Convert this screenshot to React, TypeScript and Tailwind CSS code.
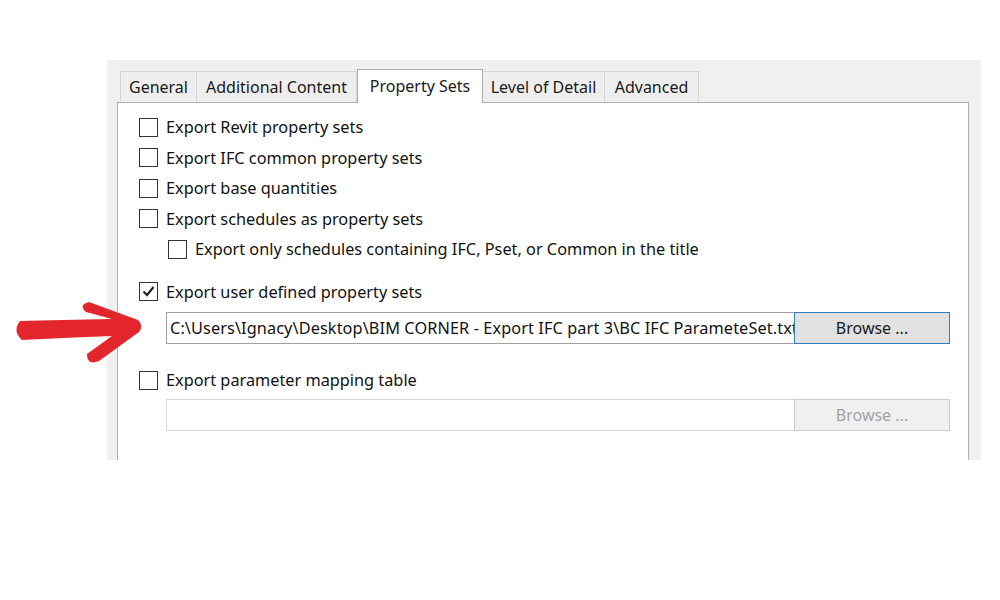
import React from 'react';

const font = { fontFamily: '"Noto Sans", "Open Sans", Arial, sans-serif' };

const tabs = [
    { label: 'General', w: 'w-[77px]' },
    { label: 'Additional Content', w: 'w-[161px]' },
    { label: 'Property Sets', w: 'w-[126px]', active: true },
    { label: 'Level of Detail', w: 'w-[123px]' },
    { label: 'Advanced', w: 'w-[95px]' },
];

const Checkbox: React.FC<{ checked?: boolean }> = ({ checked }) => (
    <div className="w-[19px] h-[19px] border border-[#333333] bg-white flex items-center justify-center shrink-0">
        {checked && (
            <svg width="15" height="15" viewBox="0 0 15 15">
                <path d="M2.5 7.5 L6 11 L12.5 3" fill="none" stroke="#222222" strokeWidth="2.2" />
            </svg>
        )}
    </div>
);

const Row: React.FC<{ label: string; checked?: boolean; indent?: boolean }> = ({ label, checked, indent }) => (
    <div className={`flex items-center gap-2 h-[30.5px] ${indent ? 'pl-[50px]' : 'pl-[21px]'}`}>
        <Checkbox checked={checked} />
        <span className="text-[16.3px] text-[#111111] whitespace-nowrap">{label}</span>
    </div>
);

// hand drawn marker arrow pointing at the path field
const RedArrow = () => (
    <svg className="absolute left-0 top-0 z-30" width="160" height="380" viewBox="0 0 160 380">
        <path
            d="M20 321 Q60 320 112 319 L86 312 Q78 305 89 302 L138 320 Q144 326 139 332 L99 361 Q87 366 87 354 L112 336 Q60 338 22 340 Q12 331 20 321 Z"
            fill="#e3262b"
        />
    </svg>
);

export default function App() {
    return (
        <div className="relative w-[1000px] h-[600px] bg-white overflow-hidden" style={font}>
            <div className="absolute left-[107px] top-[60px] w-[874px] h-[400px] bg-[#f0f0f0] overflow-hidden">
                <div className="flex items-end pl-[13px] pt-[6px] h-[42px]">
                    {tabs.map(t => (
                        <div
                            key={t.label}
                            className={`${t.w} flex items-center justify-center text-[16px] text-[#1a1a1a] whitespace-nowrap border border-b-0 ${
                                t.active
                                    ? 'h-[34px] bg-white border-[#adadad] relative z-10 -mb-px pb-[2px]'
                                    : 'h-[31px] bg-[#eeeeee] border-[#d5d5d5] -ml-px first:ml-0'
                            }`}
                        >
                            {t.label}
                        </div>
                    ))}
                </div>
                <div className="ml-[10px] w-[852px] h-[400px] bg-white border border-[#adadad] pt-[9px]">
                    <Row label="Export Revit property sets" />
                    <Row label="Export IFC common property sets" />
                    <Row label="Export base quantities" />
                    <Row label="Export schedules as property sets" />
                    <Row label="Export only schedules containing IFC, Pset, or Common in the title" indent />
                    <div className="h-[12px]" />
                    <Row label="Export user defined property sets" checked />
                    <div className="flex pl-[48px] mt-[5px] h-[32px]">
                        <div className="w-[629px] h-full border border-[#a0a0a0] bg-white flex items-center pl-[3px] overflow-hidden">
                            <span className="text-[16.3px] tracking-[0.1px] text-[#111111] whitespace-nowrap">
                                C:\Users\Ignacy\Desktop\BIM CORNER - Export IFC part 3\BC IFC ParameteSet.txt
                            </span>
                        </div>
                        <div className="w-[156px] h-full -ml-px border border-[#2f7ec1] bg-[#e1e1e1] flex items-center justify-center text-[16px] text-[#1a1a1a] relative">
                            Browse ...
                        </div>
                    </div>
                    <div className="h-[21px]" />
                    <Row label="Export parameter mapping table" />
                    <div className="flex pl-[48px] mt-[3px] h-[32px]">
                        <div className="w-[629px] h-full border border-[#d9d9d9] bg-white" />
                        <div className="w-[156px] h-full -ml-px border border-[#cccccc] bg-[#f0f0f0] flex items-center justify-center text-[16px] text-[#a3a3a3]">
                            Browse ...
                        </div>
                    </div>
                </div>
            </div>
            <RedArrow />
        </div>
    );
}
